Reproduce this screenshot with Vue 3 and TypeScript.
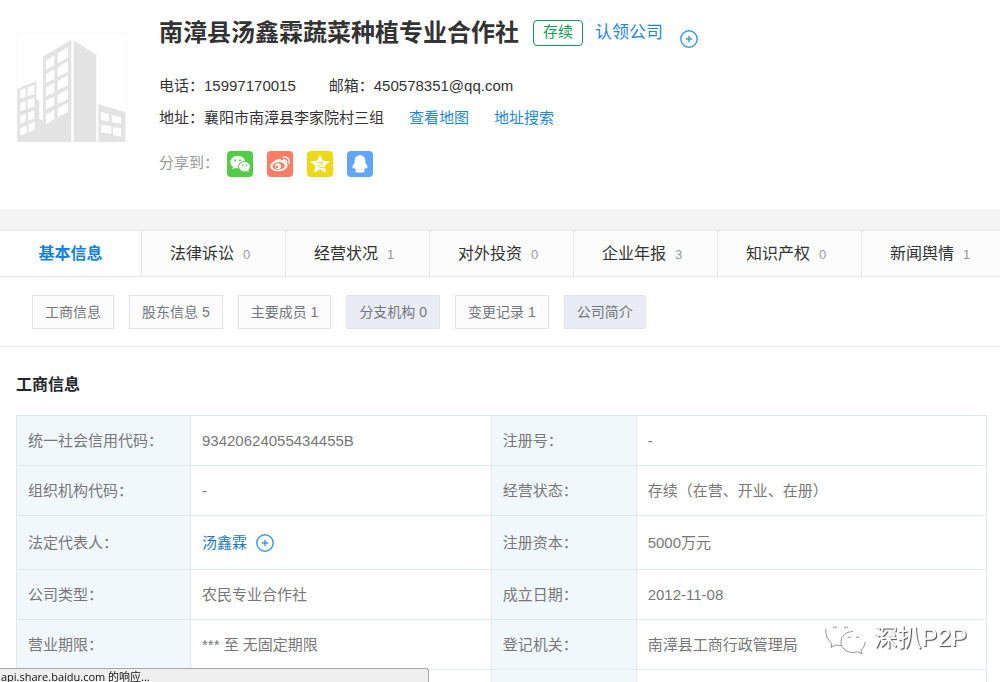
<script setup lang="ts">
interface Tab {
  label: string
  count?: number
}

interface Section {
  label: string
  count?: number
  muted?: boolean
}

interface Field {
  label: string
  value: string
  person?: boolean
}

const tabs: Tab[] = [
  { label: '基本信息' },
  { label: '法律诉讼', count: 0 },
  { label: '经营状况', count: 1 },
  { label: '对外投资', count: 0 },
  { label: '企业年报', count: 3 },
  { label: '知识产权', count: 0 },
  { label: '新闻舆情', count: 1 },
]

const sections: Section[] = [
  { label: '工商信息' },
  { label: '股东信息', count: 5 },
  { label: '主要成员', count: 1 },
  { label: '分支机构', count: 0, muted: true },
  { label: '变更记录', count: 1 },
  { label: '公司简介', muted: true },
]

const rows: [Field, Field][] = [
  [{ label: '统一社会信用代码：', value: '93420624055434455B' }, { label: '注册号：', value: '-' }],
  [{ label: '组织机构代码：', value: '-' }, { label: '经营状态：', value: '存续（在营、开业、在册）' }],
  [{ label: '法定代表人：', value: '汤鑫霖', person: true }, { label: '注册资本：', value: '5000万元' }],
  [{ label: '公司类型：', value: '农民专业合作社' }, { label: '成立日期：', value: '2012-11-08' }],
  [{ label: '营业期限：', value: '*** 至 无固定期限' }, { label: '登记机关：', value: '南漳县工商行政管理局' }],
]
</script>

<template>
  <div class="page">
    <header class="company">
      <svg class="logo" viewBox="48 36 330 330" aria-hidden="true">
        <rect x="49" y="37" width="328" height="328" fill="#fff" stroke="#fafafa" stroke-width="3" />
        <g fill="#e3e3e3">
          <path d="M52 366V206L109 183V238L118 242V296L129 302V110L214 59V366Z" />
          <path d="M221 61L289 104V366H221Z" />
          <path d="M295 366V252L376 277V366Z" />
        </g>
        <g fill="#fff">
          <path d="M138 122L163 106V136L138 149ZM173 100L204 82V113L173 130Z" />
          <path d="M138 162L163 147V177L138 189ZM173 142L204 124V155L173 171Z" />
          <path d="M138 202L163 188V217L138 229ZM173 183L204 166V196L173 211Z" />
          <path d="M138 242L163 229V257L138 268ZM173 225L204 208V237L173 252Z" />
          <path d="M138 283L163 271V298L138 313ZM173 265L204 249V276L173 291Z" />
          <path d="M61 211L77 204V230L61 236ZM83 202L103 194V222L83 229Z" />
          <path d="M61 249L77 242V268L61 274ZM83 240L103 233V259L83 266Z" />
          <path d="M61 287L77 280V304L61 311ZM84 278L103 271V296L84 302Z" />
          <path d="M61 324L80 317V339L61 347ZM86 313L104 305V329L86 336Z" />
          <path d="M303 276L327 282V304L303 300ZM335 285L363 291V311L335 307Z" />
          <path d="M303 314L334 319V342L303 337ZM339 321L363 325V350L339 344Z" />
        </g>
      </svg>

      <div class="details">
        <div class="title-row">
          <h1>南漳县汤鑫霖蔬菜种植专业合作社</h1>
          <span class="status">存续</span>
          <a class="claim" href="#">认领公司</a>
          <button class="plus" type="button" aria-label="关注公司">
            <svg viewBox="0 0 18 18"><circle cx="9" cy="9" r="8.2" /><path d="M9 5.8V12.2M5.8 9H12.2" /></svg>
          </button>
        </div>
        <div class="info">
          <span>电话：15997170015</span>
          <span>邮箱：450578351@qq.com</span>
        </div>
        <div class="info links">
          <span>地址：襄阳市南漳县李家院村三组</span>
          <a href="#">查看地图</a>
          <a href="#">地址搜索</a>
        </div>
        <div class="share">
          <span>分享到：</span>
          <div class="share-list">
            <button class="share-button wechat" type="button" aria-label="微信">
              <svg viewBox="0 0 26 26">
                <path fill="#fff" d="M10.8 5C6.400 5 3.300 7.700 3.300 11c0 2 1 3.700 2.700 4.800l-.7 2.400 2.800-1.300c.9.300 1.800.4 2.700.4h.6c-1.200-4.200 2.300-7.300 6.700-7.200C17.500 7.100 14.500 5 10.800 5Z" />
                <path fill="#fff" d="M23 15.600c0-2.700-2.500-4.700-5.500-4.700s-5.500 2-5.500 4.700 2.500 4.800 5.500 4.800c.8 0 1.500-.2 2.200-.4l2 1.100-.5-1.900c1.100-.9 1.800-2.100 1.800-3.600Z" />
                <g fill="#55cc48"><circle cx="8.200" cy="9.300" r="1" /><circle cx="13" cy="9.300" r="1" /><circle cx="15.600" cy="14.300" r=".8" /><circle cx="19.400" cy="14.300" r=".8" /></g>
              </svg>
            </button>
            <button class="share-button weibo" type="button" aria-label="微博">
              <svg viewBox="0 0 26 26">
                <path fill="#fff" d="M11 8.200c1.500-.7 3.400-.8 3.100 1.200 2.500-.8 4.600-.6 3.900 1.600 1.600.5 2.600 1.500 2.600 3 0 3.500-4.400 6.300-9.200 6.300S3.200 18.200 3.200 15.300c0-2.700 4.100-5.900 7.800-7.100Z" />
                <ellipse cx="11.600" cy="15" rx="6.100" ry="3.900" transform="rotate(-8 11.600 15)" fill="#fd7c62" />
                <circle cx="11" cy="15.300" r="3.100" fill="#fff" />
                <circle cx="9.900" cy="16" r="1.200" fill="#fd7c62" /><circle cx="12" cy="14.700" r=".5" fill="#fd7c62" />
                <path d="M16.300 6.200c4-.8 6.900 2.400 5.800 6M16.800 8.900c1.900-.3 3.200 1.100 2.700 2.900" fill="none" stroke="#fff" stroke-width="1.400" stroke-linecap="round" />
              </svg>
            </button>
            <button class="share-button qzone" type="button" aria-label="QQ空间">
              <svg viewBox="0 0 26 26">
                <path fill="#fff" stroke="#fff" stroke-linejoin="round" d="M13 4.500l2.500 5.700 6.200.6-4.700 4.100 1.400 6.100L13 17.800 7.600 21 9 14.900l-4.700-4.100 6.200-.6Z" />
                <path d="M10 11.700c2-.4 4-.3 5.800.1M16 12.100l-5.600 4.200M12.500 16.700c1.700.2 3.400.1 5-.2" fill="none" stroke="#eed817" stroke-width="1" />
              </svg>
            </button>
            <button class="share-button qq" type="button" aria-label="QQ">
              <svg viewBox="0 0 26 26">
                <path fill="#fff" d="M13 4.200c-3.500 0-5.300 2.300-5.300 5.300v1.900c-1.400 1.700-2.800 4.100-2 5.900.5.900 1.300 0 1.800-.8.300 1.100.9 1.900 1.700 2.700-1.600.9-1.200 2.200.9 2.200h5.800c2.100 0 2.500-1.300.9-2.200.8-.8 1.400-1.600 1.700-2.700.5.800 1.300 1.700 1.800.8.800-1.800-.6-4.200-2-5.900V9.500c0-3-1.800-5.300-5.300-5.300Z" />
              </svg>
            </button>
          </div>
        </div>
      </div>
    </header>

    <nav class="tabs">
      <a v-for="(tab, i) in tabs" :key="tab.label" href="#" class="tab" :class="{ active: i === 0 }">
        {{ tab.label }}<small v-if="tab.count !== undefined">{{ tab.count }}</small>
      </a>
    </nav>

    <nav class="sections">
      <a v-for="s in sections" :key="s.label" href="#" class="section" :class="{ muted: s.muted }">{{ s.label }}{{ s.count !== undefined ? ' ' + s.count : '' }}</a>
    </nav>

    <main>
      <h2>工商信息</h2>
      <table>
        <colgroup>
          <col class="label-col" /><col class="value-col" /><col class="label-col-narrow" /><col />
        </colgroup>
        <tbody>
          <tr v-for="(row, i) in rows" :key="i" :class="{ tall: row[0].person }">
            <template v-for="field in row" :key="field.label">
              <th scope="row">{{ field.label }}</th>
              <td>
                <div v-if="field.person" class="person">
                  <a href="#">{{ field.value }}</a>
                  <button class="plus" type="button" aria-label="关注">
                    <svg viewBox="0 0 18 18"><circle cx="9" cy="9" r="8.2" /><path d="M9 5.8V12.2M5.8 9H12.2" /></svg>
                  </button>
                </div>
                <template v-else>{{ field.value }}</template>
              </td>
            </template>
          </tr>
          <tr><th></th><td></td><th></th><td></td></tr>
        </tbody>
      </table>
    </main>

    <div class="watermark">
      <svg viewBox="0 0 42 36" aria-hidden="true">
        <path class="bubble" d="M16 1C7.500 1 1 6.500 1 13.500c0 4 2.200 7.500 5.800 9.800L5 28l5.500-2.800c1.700.5 3.500.8 5.500.8 8.500 0 15-5.500 15-12.500S24.500 1 16 1Z" />
        <path class="shade" d="M1 8.500c-1 6 1.500 11.500 5.800 14.800L6 27.500l5-2.500 5 .5" />
        <path class="bubble" d="M28 11.500c-7 0-12 4.600-12 10.500s5 10.500 12 10.500c1.700 0 3.200-.3 4.600-.8L37 34l-1.200-4C38.500 28 40 25.200 40 22c0-5.900-5-10.500-12-10.500Z" />
        <path class="shade" d="M28 11.500c-7 0-12 4.600-12 10.500s5 10.500 12 10.500c1.700 0 3.200-.3 4.600-.8L37 34l-1.200-4C38.500 28 40 25.200 40 22" />
        <path class="shade" d="M8 8q2-2.500 4 0M19 8q2-2.500 4 0M22.500 18q1.800-2.200 3.500 0M31 18q1.800-2.200 3.500 0" />
      </svg>
      <span>深扒P2P</span>
    </div>

    <div class="browser-status">api.share.baidu.com 的响应...</div>
  </div>
</template>

<style>
html,
body {
  margin: 0;
  height: 100%;
  overflow: hidden;
  background: #fff;
}
</style>

<style scoped>
.page {
  font-family: "Liberation Sans", "Noto Sans CJK SC", sans-serif;
  font-size: 15px;
  color: #333;
}

a {
  color: #1e88e0;
  text-decoration: none;
}

button {
  padding: 0;
  border: 0;
  background: none;
  cursor: pointer;
}

.company {
  display: flex;
  align-items: flex-start;
  gap: 33px;
  padding: 15px 16px 32px;
}

.logo {
  flex: none;
  width: 110px;
  height: 110px;
  margin-top: 17px;
}

.title-row {
  display: flex;
  align-items: center;
  height: 36px;
  margin-bottom: 19px;
}

h1 {
  margin: 0 14px 0 0;
  font-size: 24px;
  line-height: 36px;
  font-weight: 700;
}

.status {
  box-sizing: border-box;
  width: 50px;
  height: 26px;
  margin-right: 12px;
  border: 1px solid #159a55;
  border-radius: 4px;
  color: #159a55;
  text-align: center;
  line-height: 22px;
}

.claim {
  font-size: 17px;
  line-height: 34px;
  margin-right: 17px;
}

.plus {
  width: 18px;
  height: 18px;
}

.title-row .plus {
  align-self: flex-end;
  margin-bottom: 3px;
}

.plus svg {
  display: block;
  fill: none;
  stroke: #3c96ee;
  stroke-width: 1.4;
}

.info {
  display: flex;
  line-height: 32px;
  gap: 33px;
}

.info.links {
  gap: 25px;
}

.share {
  display: flex;
  align-items: flex-start;
  margin-top: 17px;
  color: #999;
  line-height: 24px;
}

.share-list {
  display: flex;
  gap: 14px;
  margin-left: 8px;
}

.share-button {
  width: 26px;
  height: 26px;
  border-radius: 4px;
}

.share-button svg {
  display: block;
}

.wechat {
  background: #55cc48;
}

.weibo {
  background: #fd7c62;
}

.qzone {
  background: #eed817;
}

.qq {
  background: #61a4fb;
}

.tabs {
  display: flex;
  overflow: hidden;
  border-top: 21px solid #f4f4f4;
  border-bottom: 1px solid #e6e6e6;
  background: #fcfcfc;
}

.tab {
  box-sizing: border-box;
  flex: 0 0 144px;
  height: 46px;
  padding-left: 28px;
  border-top: 1px solid #e6e6e6;
  border-right: 1px solid #e6e6e6;
  font-size: 16px;
  line-height: 46px;
  color: #333;
  white-space: nowrap;
}

.tab.active {
  flex-basis: 142px;
  padding-left: 0;
  background: #fff;
  color: #1482e0;
  font-weight: 700;
  text-align: center;
}

.tab small {
  margin-left: 9px;
  font-size: 13px;
  color: #999;
}

.sections {
  display: flex;
  gap: 15px;
  padding: 18px 32px 17px;
  border-bottom: 1px solid #e9e9e9;
}

.section {
  padding: 0 12px;
  border: 1px solid #e4e4e4;
  background: #fcfcfc;
  color: #73777d;
  font-size: 14px;
  line-height: 32px;
}

.section.muted {
  border-color: #e2e5ee;
  background: #e9ecf4;
}

main {
  padding: 0 13px 0 16px;
}

h2 {
  margin: 0;
  padding: 26px 0 18px;
  font-size: 16px;
  line-height: 24px;
  color: #24292f;
}

table {
  width: 100%;
  table-layout: fixed;
  border-collapse: collapse;
}

.label-col {
  width: 174px;
}

.value-col {
  width: 31%;
}

.label-col-narrow {
  width: 145px;
}

th,
td {
  height: 49px;
  padding: 0 11px;
  border: 1px solid #e3eaee;
  font-weight: 400;
  line-height: 20px;
  text-align: left;
  color: #777;
}

.tall th,
.tall td {
  height: 53px;
}

th {
  background: #f0f8fc;
}

.person {
  display: flex;
  align-items: center;
  gap: 9px;
}

.person a {
  color: #1b78bd;
}

.watermark {
  position: fixed;
  right: 33px;
  bottom: 26px;
  display: flex;
  align-items: center;
  gap: 7px;
  color: #fff;
  font-size: 24px;
  line-height: 36px;
  text-shadow: 1px 1px 1px #444;
}

.watermark svg {
  width: 42px;
  height: 36px;
}

.bubble {
  fill: #fff;
}

.shade {
  fill: none;
  stroke: #888;
  stroke-width: 0.9;
}

.browser-status {
  position: fixed;
  left: 0;
  bottom: 0;
  box-sizing: border-box;
  width: 429px;
  height: 14px;
  padding-left: 1px;
  border: solid #a8a8a8;
  border-width: 1px 1px 0 0;
  border-radius: 0 3px 0 0;
  background: #efefef;
  color: #111;
  font-family: "Open Sans", "Noto Sans CJK SC", sans-serif;
  font-size: 11px;
  line-height: 16px;
}
</style>
